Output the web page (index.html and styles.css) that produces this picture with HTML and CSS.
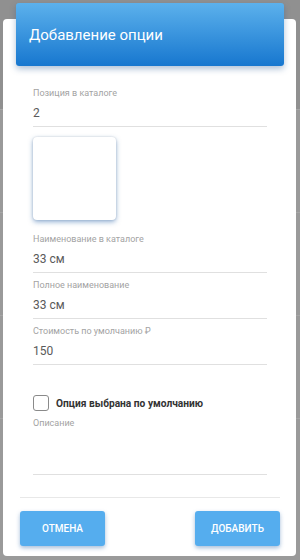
FILE: index.html
```html
<!DOCTYPE html>
<html lang="ru">
<head>
    <meta charset="UTF-8">
    <meta name="viewport" content="width=device-width, initial-scale=1.0">
    <title>Добавление опции</title>
    <link rel="stylesheet" href="styles.css">
</head>
<body>
    <div class="backdrop">
        <div class="bg-row top"></div>
        <div class="bg-row"></div>
        <div class="bg-row"></div>
        <div class="bg-row"></div>
    </div>
    <div class="modal">
        <div class="card">
            <div class="card-header">Добавление опции</div>
            <div class="card-body">
                <div class="field">
                    <label>Позиция в каталоге</label>
                    <div class="value">2</div>
                </div>
                <div class="image-box"></div>
                <div class="field">
                    <label>Наименование в каталоге</label>
                    <div class="value">33 см</div>
                </div>
                <div class="field">
                    <label>Полное наименование</label>
                    <div class="value">33 см</div>
                </div>
                <div class="field">
                    <label>Стоимость по умолчанию ₽</label>
                    <div class="value">150</div>
                </div>
                <div class="check-row">
                    <span class="checkbox"></span>
                    <span class="check-label">Опция выбрана по умолчанию</span>
                </div>
                <div class="field textarea">
                    <label>Описание</label>
                    <div class="value"></div>
                </div>
            </div>
            <div class="card-footer">
                <button class="btn">Отмена</button>
                <button class="btn">Добавить</button>
            </div>
        </div>
    </div>
</body>
</html>
```

FILE: styles.css
```css
* {
    box-sizing: border-box;
}
body {
    margin: 0;
    height: 560px;
    overflow: hidden;
    background: #9a9a9a;
    font-family: Roboto, "Noto Sans", sans-serif;
}
.backdrop {
    position: absolute;
    inset: 0;
}
.bg-row {
    height: 103px;
    border-bottom: 1px solid #a6a6a6;
}
.bg-row.top {
    height: 110px;
    background: #909090;
}
.modal {
    position: relative;
    padding: 3px 4px 0 3px;
}
.card {
    margin-top: 16px;
    height: 537px;
    background: #fff;
    border-radius: 4px;
    display: flex;
    flex-direction: column;
}
.card-header {
    margin: -16px 12px 0 13px;
    height: 63px;
    padding: 0 13px;
    display: flex;
    align-items: center;
    color: #fff;
    font-size: 15px;
    border-radius: 3px;
    background: linear-gradient(#5cb1ec, #1777cf);
    box-shadow: 0 3px 6px rgba(30, 80, 140, 0.35);
}
.card-body {
    padding: 21px 29px 0 30px;
}
.field {
    margin-bottom: 6px;
}
.field label {
    display: block;
    font-size: 9px;
    line-height: 12px;
    color: #a3a3a3;
}
.field .value {
    margin-top: 4px;
    padding-bottom: 3px;
    height: 24px;
    line-height: 20px;
    font-size: 12px;
    color: #5a5a5a;
    border-bottom: 1px solid #e0e0e0;
}
.field.textarea .value {
    height: 42px;
}
.image-box {
    width: 83px;
    height: 83px;
    margin: 10px 0 13px;
    border-radius: 4px;
    background: #fff;
    box-shadow: 0 2px 5px rgba(40, 100, 170, 0.5), 0 0 2px rgba(0, 0, 0, 0.15);
}
.check-row {
    margin-top: 30px;
    display: flex;
    align-items: center;
    gap: 7px;
}
.checkbox {
    width: 16px;
    height: 16px;
    border: 1.5px solid #8a8a8a;
    border-radius: 3px;
}
.check-label {
    font-size: 10.2px;
    font-weight: 700;
    color: #333;
}
.check-row + .field {
    margin-top: 6px;
}
.card-footer {
    margin: 16px 16px 0 17px;
    padding-top: 13px;
    border-top: 1px solid #e8e8e8;
    display: flex;
    justify-content: space-between;
}
.btn {
    width: 85px;
    height: 35px;
    border: none;
    border-radius: 3px;
    background: #55adee;
    color: #fff;
    font-family: Roboto, sans-serif;
    font-size: 10px;
    font-weight: 500;
    text-transform: uppercase;
    box-shadow: 0 2px 4px rgba(30, 90, 160, 0.4);
}
```
